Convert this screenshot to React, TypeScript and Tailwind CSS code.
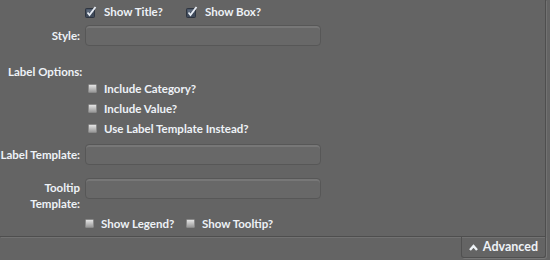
const font = { fontFamily: 'Lato, "Open Sans", sans-serif' };

function Check({ checked }: { checked?: boolean }) {
  if (checked) {
    return (
      <svg width="12" height="12" viewBox="0 0 12 12" className="shrink-0">
        <rect x="0.5" y="2.5" width="9" height="9" rx="1" fill="#3f4a5a" stroke="#2e3540" />
        <rect x="1.5" y="3.5" width="7" height="3" fill="#5a6678" />
        <path d="M2.5 6.5 L4.5 9 L10.5 1" fill="none" stroke="#e8eef6" strokeWidth="1.8" />
      </svg>
    );
  }
  return (
    <span className="block w-[9px] h-[9px] shrink-0 rounded-[1px] border border-[#8a8a8a] bg-gradient-to-b from-[#e4e4e4] to-[#9a9a9a]" />
  );
}

function Field() {
  return (
    <div className="w-[236px] h-[21px] rounded-[4px] border border-[#575757] bg-[#686868] shadow-[inset_0_2px_0_#777]" />
  );
}

function Opt({ label, checked }: { label: string; checked?: boolean }) {
  return (
    <label className="flex items-center gap-[7px]">
      <Check checked={checked} />
      <span>{label}</span>
    </label>
  );
}

export default function App() {
  return (
    <div className="w-[550px] h-[260px] bg-[#646464] text-[#eef2f7] text-[11.5px] font-bold overflow-hidden" style={font}>
      <div className="w-[546px] h-[237px] border-r border-b border-[#4e4e4e] shadow-[1px_1px_0_#727272]">
        <div className="flex pl-[85px] pt-[3px] h-[20px] items-center">
          <div className="w-[101px]"><Opt label="Show Title?" checked /></div>
          <Opt label="Show Box?" checked />
        </div>
        <div className="flex items-center gap-[5px] mt-[5px]">
          <div className="w-[80px] text-right">Style:</div>
          <Field />
        </div>
        <div className="pl-[8px] mt-[19px] leading-[14px]">Label Options:</div>
        <div className="pl-[88px] mt-[2px] flex flex-col gap-[5px] leading-[15px]">
          <Opt label="Include Category?" />
          <Opt label="Include Value?" />
          <Opt label="Use Label Template Instead?" />
        </div>
        <div className="flex items-center gap-[5px] mt-[8px]">
          <div className="w-[80px] text-right whitespace-nowrap">Label Template:</div>
          <Field />
        </div>
        <div className="flex items-start gap-[5px] mt-[13px]">
          <div className="w-[80px] text-right leading-[16px] pt-[2px]">Tooltip<br />Template:</div>
          <Field />
        </div>
        <div className="flex pl-[85px] mt-[3px] items-center">
          <div className="w-[101px]"><Opt label="Show Legend?" /></div>
          <Opt label="Show Tooltip?" />
        </div>
      </div>
      <div className="flex justify-end pr-[4px]">
        <div className="flex items-center gap-[5px] h-[21px] px-[7px] border-l border-r border-b border-[#505050] rounded-b-[3px] shadow-[1px_1px_0_#777] text-[12.5px]">
          <svg width="9" height="7" viewBox="0 0 9 7" className="shrink-0"><path d="M1 6 L4.5 2 L8 6" fill="none" stroke="#eef2f6" strokeWidth="2.4" /></svg>
          <span>Advanced</span>
        </div>
      </div>
    </div>
  );
}
